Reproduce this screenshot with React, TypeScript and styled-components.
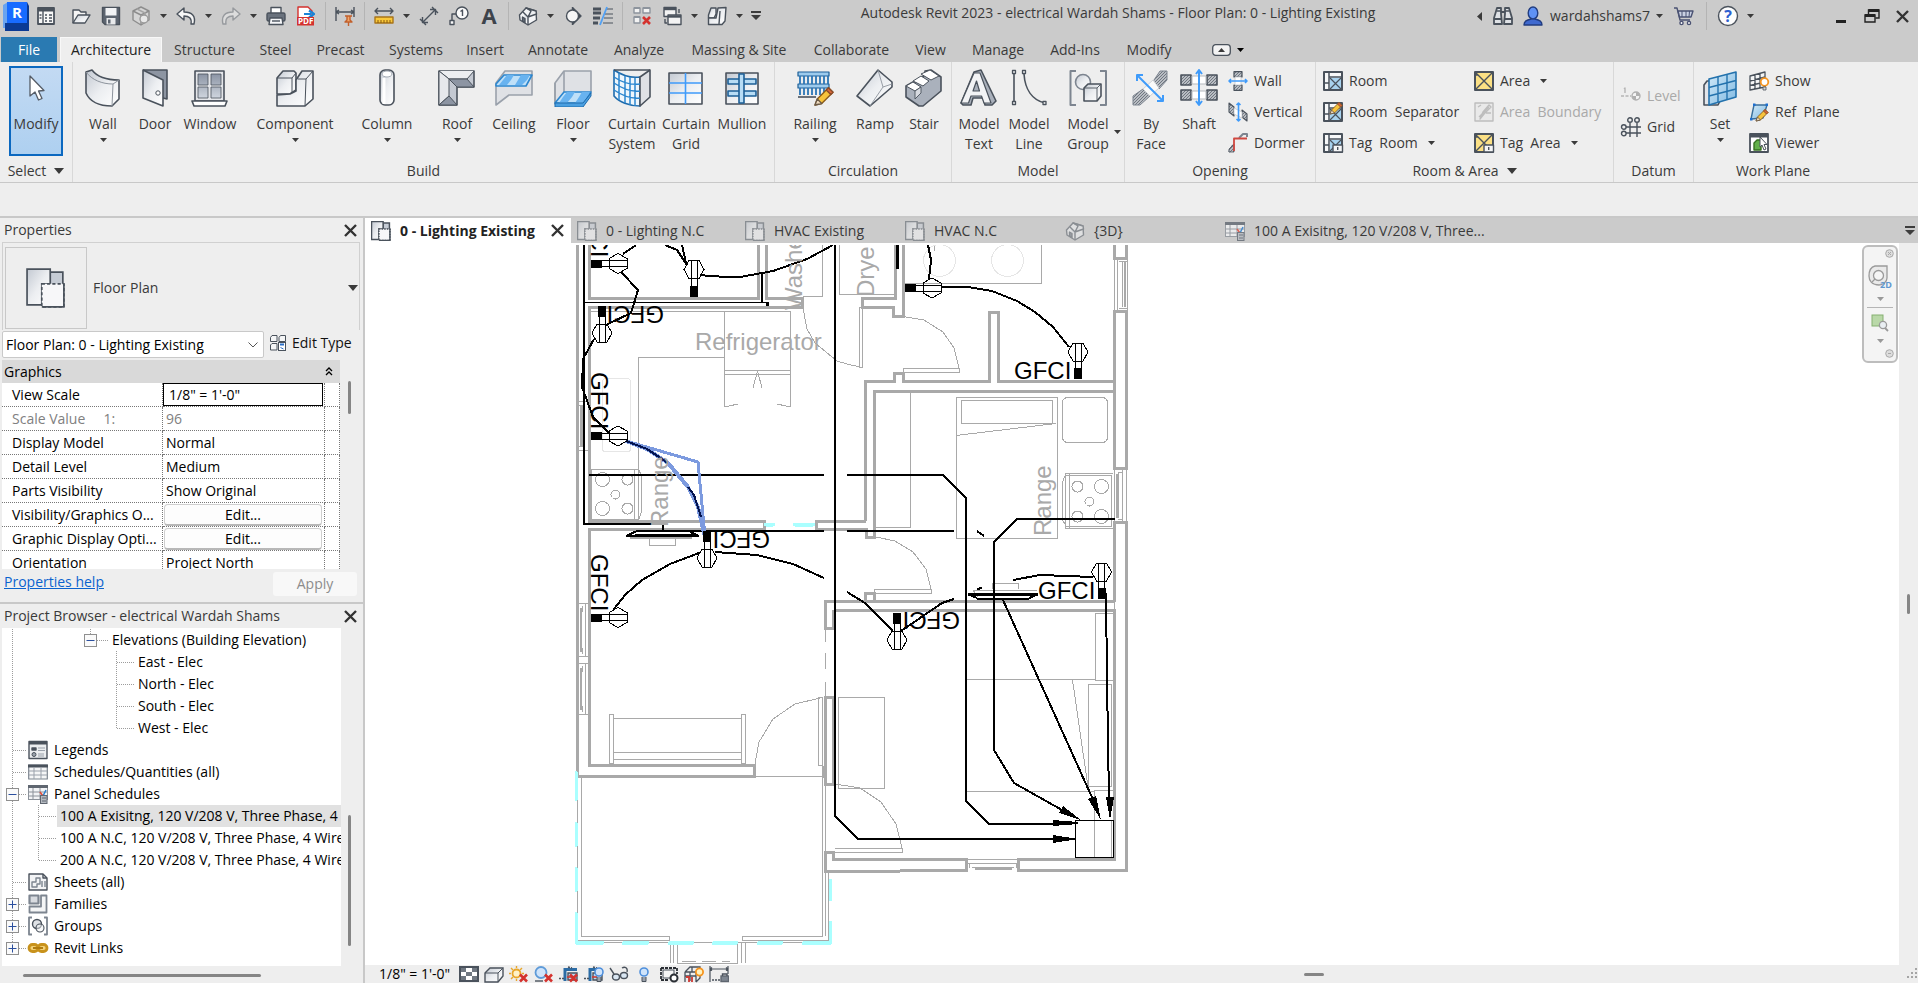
import React from "react";
import styled, { createGlobalStyle, css } from "styled-components";

const Global = createGlobalStyle`
  * { box-sizing: border-box; }
  html, body { margin: 0; padding: 0; }
  body, button, input, select, table {
    font-family: "Open Sans", "Noto Sans", sans-serif;
    font-size: 14px;
    line-height: 20px;
    color: #3a3a3a;
  }
  button { border: 0; padding: 0; background: none; }
  svg { display: block; flex: none; }
`;

/* ---------- palette ---------- */
const BAR = "#cbcbcb";
const FACE = "#eeeeee";
const INK = "#4a525c";
const BLUE = "#3f9bfa";

/* ---------- window frame ---------- */
const Window = styled.div`
  display: flex;
  flex-direction: column;
  height: 100vh;
  background: ${FACE};
  overflow: hidden;
`;

const TitleBar = styled.header`
  display: flex;
  align-items: center;
  height: 37px;
  padding-bottom: 5px;
  background: ${BAR};
  flex: none;
`;

const Logo = styled.div`
  width: 31px;
  padding-left: 3px;
`;

const Tool = styled.button<{ $w?: number; $dim?: boolean }>`
  display: flex;
  align-items: center;
  justify-content: center;
  width: ${(p) => p.$w ?? 30}px;
  height: 30px;
  flex: none;
  opacity: ${(p) => (p.$dim ? 0.4 : 1)};
`;

const Divider = styled.i<{ $w?: number }>`
  width: ${(p) => p.$w ?? 9}px;
  height: 28px;
  flex: none;
  background: linear-gradient(#b4b4b4, #b4b4b4) center / 1px 100% no-repeat;
`;

const QuickAccess = styled.div`
  display: flex;
  align-items: center;
  flex: none;
`;

const QuickGroup = styled.div`
  display: flex;
  align-items: center;
  margin-left: 5px;
`;

const WindowTitle = styled.h1`
  flex: 1;
  margin: 0;
  padding-bottom: 6px;
  font-size: 14px;
  line-height: 20px;
  font-weight: 400;
  text-align: center;
  white-space: nowrap;
  overflow: hidden;
`;

const Account = styled.div`
  display: flex;
  align-items: center;
  flex: none;
`;

const UserButton = styled.button`
  display: flex;
  align-items: center;
  justify-content: space-between;
  width: 113px;
  margin: 0 6px 0 2px;
`;

const WindowButtons = styled.div`
  display: flex;
  margin-left: 67px;
`;

/* ---------- ribbon tabs ---------- */
const RibbonTabs = styled.nav`
  display: flex;
  align-items: stretch;
  height: 25px;
  padding-left: 1px;
  background: ${BAR};
  flex: none;
`;

const RibbonTab = styled.button<{ $w: number; $kind?: "file" | "active" }>`
  width: ${(p) => p.$w}px;
  white-space: nowrap;
  flex: none;
  ${(p) =>
    p.$kind === "file" &&
    css`
      margin-right: 3px;
      background: #2a7ab2;
      color: #fff;
    `}
  ${(p) =>
    p.$kind === "active" &&
    css`
      background: ${FACE};
      color: #222;
      border: 1px solid #f8f8f8;
      border-bottom: 0;
    `}
`;

const RibbonToggle = styled.button`
  display: flex;
  align-items: center;
  gap: 6px;
  margin-left: 27px;
`;

/* ---------- ribbon ---------- */
const Ribbon = styled.section`
  display: flex;
  height: 121px;
  border-bottom: 1px solid #c8c8c8;
  flex: none;
`;

const OptionsBar = styled.div`
  height: 33px;
  flex: none;
`;

const Panel = styled.section<{ $w: number; $last?: boolean }>`
  display: flex;
  flex-direction: column;
  width: ${(p) => p.$w}px;
  flex: none;
  padding-top: 1px;
  border-right: ${(p) => (p.$last ? 0 : 1)}px solid #d8d8d8;
`;

const PanelBody = styled.div<{ $pad?: number }>`
  display: flex;
  height: 98px;
  padding-left: ${(p) => p.$pad ?? 0}px;
`;

const PanelTitle = styled.h2`
  display: flex;
  justify-content: center;
  align-items: center;
  gap: 8px;
  height: 20px;
  margin: 0;
  font-size: 14px;
  font-weight: 400;
`;

const BigButton = styled.button<{ $w: number }>`
  display: flex;
  flex-direction: column;
  align-items: center;
  width: ${(p) => p.$w}px;
  padding-top: 6px;
  white-space: nowrap;
  flex: none;
`;

const BigIcon = styled.span`
  display: flex;
  align-items: center;
  justify-content: center;
  height: 38px;
  margin-bottom: 7px;
`;

const DropMark = styled.span`
  display: flex;
  padding-top: 4px;
`;

const SideMark = styled.span`
  display: flex;
  align-items: center;
  align-self: flex-end;
  margin: -24px 1px 0 0;
`;

const ModifyButton = styled.button`
  display: flex;
  flex-direction: column;
  align-items: center;
  width: 54px;
  height: 90px;
  margin: 3px 0 0 9px;
  padding-top: 1px;
  border: 2px solid #0b68c0;
  background: linear-gradient(#c3daf3, #aed0f0);
`;

const SmallColumn = styled.div<{ $top?: number; $left?: number; $w?: number }>`
  display: flex;
  flex-direction: column;
  padding-top: ${(p) => p.$top ?? 2}px;
  margin-left: ${(p) => p.$left ?? 0}px;
  width: ${(p) => (p.$w ? p.$w + "px" : "auto")};
`;

const SmallButton = styled.button<{ $off?: boolean }>`
  display: flex;
  align-items: center;
  gap: 6px;
  height: 31px;
  white-space: pre;
  color: ${(p) => (p.$off ? "#a9a9a9" : "#3a3a3a")};
  & > svg:last-child:not(:first-child) {
    margin-left: 4px;
  }
`;

/* ---------- work area ---------- */
const WorkArea = styled.main`
  display: flex;
  flex: 1;
  min-height: 0;
  border-top: 2px solid #c8c8c8;
`;

const Dock = styled.aside`
  display: flex;
  flex-direction: column;
  width: 365px;
  flex: none;
  border-right: 2px solid #c8c8c8;
`;

const DockHeader = styled.header`
  display: flex;
  align-items: center;
  justify-content: space-between;
  height: 24px;
  padding: 0 6px 0 4px;
  flex: none;
`;

const DockTitle = styled.h2`
  margin: 0;
  font-size: 14px;
  font-weight: 400;
`;

const CloseButton = styled.button`
  display: flex;
`;

const TypeSelector = styled.button`
  display: flex;
  align-items: center;
  height: 88px;
  margin: 0 3px 0 2px;
  padding: 3px 1px 1px 2px;
  border: 1px solid #d0d0d0;
  border-bottom: 0;
  text-align: left;
  flex: none;
`;

const TypeThumb = styled.span`
  display: flex;
  align-items: center;
  justify-content: center;
  width: 82px;
  height: 82px;
  border: 1px solid #c8c8c8;
`;

const TypeName = styled.span`
  flex: 1;
  padding-left: 6px;
`;

const InstanceRow = styled.div`
  display: flex;
  align-items: center;
  height: 30px;
  padding: 1px 0 2px 2px;
  flex: none;
`;

const SelectBox = styled.div`
  display: grid;
  width: 262px;
  height: 27px;
  background: #fff;
  border: 1px solid #c9c9c9;
  border-radius: 2px;
  align-items: center;
  & > * { grid-area: 1 / 1; }
  & > svg { justify-self: end; margin-right: 5px; pointer-events: none; }
`;

const InstanceSelect = styled.select`
  appearance: none;
  width: 100%;
  height: 25px;
  border: 0;
  padding: 0 0 0 3px;
  background: transparent;
  color: #000;
`;

const EditType = styled.button`
  display: flex;
  align-items: center;
  gap: 6px;
  margin-left: 6px;
  padding-bottom: 3px;
  color: #111;
`;

const Scroller = styled.div`
  display: flex;
  height: 209px;
  padding-left: 2px;
  overflow: hidden;
  flex: none;
`;

const Grid = styled.table`
  width: 338px;
  table-layout: fixed;
  border-collapse: separate;
  border-spacing: 0;
  color: #000;
  background: #fff;
  align-self: flex-start;
  & td, & tbody th {
    height: 24px;
    padding: 0 0 0 3px;
    font-weight: 400;
    text-align: left;
    white-space: nowrap;
    overflow: hidden;
    border-bottom: 1px dotted #777;
    border-right: 1px dotted #777;
  }
  & tbody th { padding-left: 10px; text-overflow: ellipsis; }
`;

const GroupHead = styled.th`
  height: 23px;
  padding: 0 7px 0 2px;
  background: #d9d9d9;
  font-weight: 400;
`;

const GroupLabel = styled.span`
  display: flex;
  justify-content: space-between;
  align-items: center;
`;

const Muted = styled.span`
  color: #808080;
  white-space: pre;
`;

const ValueInput = styled.input`
  display: block;
  width: 160px;
  height: 23px;
  margin-left: -3px;
  padding: 0 5px;
  border: 1px solid #000;
  background: #fff;
  color: #000;
`;

const EditButton = styled.button`
  display: block;
  width: 158px;
  height: 22px;
  margin-left: -2px;
  border: 1px solid #cfcfcf;
  border-bottom: 2px solid #b8b8b8;
  border-radius: 4px;
  background: #fdfdfd;
  line-height: 19px;
  color: #000;
`;

const VTrack = styled.div<{ $top: number }>`
  display: flex;
  justify-content: flex-end;
  flex: 1;
  padding: ${(p) => p.$top}px 12px 0 0;
`;

const VThumb = styled.i<{ $h: number }>`
  width: 3px;
  height: ${(p) => p.$h}px;
  border-radius: 2px;
  background: #858585;
`;

const DockFooter = styled.footer`
  display: flex;
  align-items: flex-start;
  justify-content: space-between;
  height: 35px;
  padding: 3px 6px 0 4px;
  border-bottom: 2px solid #c8c8c8;
  flex: none;
`;

const HelpLink = styled.a`
  color: #0b63ce;
`;

const ApplyButton = styled.button`
  width: 84px;
  height: 24px;
  border-radius: 3px;
  background: #f8f8f8;
  color: #8c8c8c;
`;

/* ---------- project browser ---------- */
const TreeRow = styled.div`
  display: flex;
  flex: 1;
  min-height: 0;
  padding-left: 2px;
`;

const Tree = styled.ul`
  width: 339px;
  height: 100%;
  margin: 0;
  padding: 1px 0 0;
  list-style: none;
  background: #fff;
  color: #000;
  overflow: hidden;
`;

const TreeItem = styled.li`
  display: flex;
  align-items: center;
  height: 22px;
  white-space: nowrap;
`;

const TreeLabel = styled.span<{ $sel?: boolean; $gap?: number }>`
  flex: 1;
  height: 22px;
  line-height: 22px;
  padding-left: ${(p) => p.$gap ?? 3}px;
  overflow: hidden;
  background: ${(p) => (p.$sel ? "#e1e1e1" : "transparent")};
`;

const HTrack = styled.div`
  display: flex;
  align-items: center;
  height: 17px;
  padding: 2px 0 0 23px;
  flex: none;
`;

const HThumb = styled.i<{ $w: number }>`
  width: ${(p) => p.$w}px;
  height: 3px;
  border-radius: 2px;
  background: #858585;
`;

/* ---------- documents ---------- */
const Documents = styled.section`
  display: flex;
  flex-direction: column;
  flex: 1;
  min-width: 0;
`;

const DocTabs = styled.nav`
  display: flex;
  height: 25px;
  background: ${BAR};
  flex: none;
`;

const DocTab = styled.button<{ $w: number; $active?: boolean }>`
  display: flex;
  align-items: center;
  gap: 9px;
  width: ${(p) => p.$w}px;
  padding-left: 6px;
  white-space: nowrap;
  flex: none;
  ${(p) =>
    p.$active &&
    css`
      background: #fff;
      color: #222;
      font-weight: 700;
      & > svg:last-child { margin-left: auto; margin-right: 7px; }
    `}
`;

const DocMenu = styled.button`
  margin: 0 3px 0 auto;
`;

const ViewRow = styled.div`
  display: flex;
  flex: 1;
  min-height: 0;
`;

const Canvas = styled.div`
  position: relative;
  flex: 1;
  min-width: 0;
  overflow: hidden;
  background: #fff;
  padding-top: 2px;
`;

const NavBar = styled.div`
  position: absolute;
  top: 2px;
  right: 1px;
  display: flex;
  flex-direction: column;
  align-items: center;
  justify-content: space-between;
  width: 36px;
  height: 118px;
  padding: 2px 2px 3px;
  border: 2px solid #bdbdbd;
  border-radius: 6px;
  background: #f4f4f4;
`;

const NavEnd = styled.span`
  align-self: flex-end;
`;

const NavLine = styled.i`
  width: 26px;
  height: 1px;
  background: #b5b5b5;
`;

const RightTrack = styled.div`
  display: flex;
  justify-content: center;
  align-items: center;
  width: 19px;
  flex: none;
  background: ${FACE};
  & > i { width: 3px; height: 20px; background: #858585; border-radius: 2px; }
`;

const ViewBar = styled.footer`
  display: flex;
  align-items: center;
  height: 18px;
  padding-left: 14px;
  background: ${FACE};
  flex: none;
`;

const ScaleText = styled.button`
  width: 77px;
  text-align: left;
  color: #000;
`;

const ViewTool = styled.button`
  display: flex;
  justify-content: center;
  width: 25px;
  flex: none;
`;

const BottomTrack = styled.div`
  display: flex;
  flex: 1;
  padding-left: 573px;
  & > i { width: 20px; height: 3px; background: #858585; border-radius: 2px; }
`;

/* ---------- icon helpers ---------- */
type Kids = { children: React.ReactNode };
const S = ({ children }: Kids) => (
  <svg width="20" height="20" viewBox="0 0 20 20" overflow="visible" fill="none" stroke={INK} strokeWidth="1.4" strokeLinejoin="round">
    {children}
  </svg>
);
const B = ({ children }: Kids) => (
  <svg width="38" height="38" viewBox="0 0 38 38" fill="none" stroke={INK} strokeWidth="1.6" strokeLinejoin="round">
    {children}
  </svg>
);
const Down = ({ s = 7, c = "#3a3a3a" }: { s?: number; c?: string }) => (
  <svg width={s} height={s === 7 ? 4 : 6} viewBox="0 0 10 6" preserveAspectRatio="none" fill={c}>
    <path d="M0 0H10L5 6Z" />
  </svg>
);
const Cross = ({ s = 13 }: { s?: number }) => (
  <svg width={s} height={s} viewBox="0 0 13 13" stroke="#333" strokeWidth="2.4">
    <path d="M1 1L12 12M12 1L1 12" />
  </svg>
);
const ST = "url(#steel)";

const SharedPaint = () => (
  <svg width="0" height="0" style={{ position: "absolute" }} aria-hidden="true">
    <defs>
      <linearGradient id="steel" x1="0" y1="0" x2="1" y2="1">
        <stop offset="0" stopColor="#c3c9d2" />
        <stop offset="0.5" stopColor="#eceef1" />
        <stop offset="1" stopColor="#ffffff" />
      </linearGradient>
      <linearGradient id="glass" x1="0" y1="0" x2="1" y2="1">
        <stop offset="0" stopColor="#d3eaf8" />
        <stop offset="1" stopColor="#7fb9e2" />
      </linearGradient>
      <linearGradient id="pane" x1="0" y1="0" x2="0" y2="1">
        <stop offset="0" stopColor="#8b94a4" />
        <stop offset="1" stopColor="#cfd5de" />
      </linearGradient>
      <pattern id="hatch" width="3" height="3" patternUnits="userSpaceOnUse">
        <rect width="3" height="3" fill="#b9bdc3" />
        <path d="M0 3L3 0" stroke="#5d646e" strokeWidth="0.8" />
      </pattern>
    </defs>
  </svg>
);

const Pencil = ({ x, y, k = 1 }: { x: number; y: number; k?: number }) => (
  <g transform={`translate(${x} ${y}) scale(${k})`} strokeWidth="0.9">
    <path d="M0 12L1.500 8L9 0.500L12 3.500L4.500 11Z" fill="#f7c33c" stroke="#8a5a18" />
    <path d="M7.500 2L9 0.500L12 3.500L10.500 5Z" fill="#d9683a" stroke="#8a4a28" />
    <path d="M0 12L1.500 8L4.500 11Z" fill="#f2ddc0" stroke="#6a5a48" />
  </g>
);
const RedX = ({ x, y }: { x: number; y: number }) => (
  <path d={`M${x} ${y}l7 7m0 -7l-7 7`} stroke="#d4322e" strokeWidth="2.6" />
);

/* ---------- title bar icons ---------- */
const RevitLogo = () => (
  <svg width="27" height="29" viewBox="0 0 27 29" overflow="visible">
    <path d="M0 3L5 0V21L2 26H0Z" fill="#69a3f0" />
    <path d="M2 21H26V29H2Z" fill="#0b3a94" />
    <path d="M4 0H24V21H4Z" fill="#186bff" />
    <path d="M24 0L26 4V29L24 21Z" fill="#0b3a94" />
    <text x="9" y="16" fontFamily="Open Sans" fontWeight="700" fontSize="15" fill="#fff">R</text>
  </svg>
);
const HomeMenu = () => (
  <S>
    <rect x="2" y="2" width="16" height="16" fill="#f7f7f7" strokeWidth="1.8" />
    <path d="M2 4H18" strokeWidth="3" />
    <path d="M7 5V18" />
    <path d="M9 9H11M13 9H16M9 12H11M13 12H16M9 15H11M13 15H16M3.500 9H5.500M3.500 12H5.500" />
  </S>
);
const Open = () => (
  <S>
    <path d="M2 17V4H8L10 6H15V9" fill="#f5f5f5" />
    <path d="M2 17L7 9H19L14 17Z" fill={ST} />
  </S>
);
const Save = () => (
  <S>
    <path d="M1.500 1.500H18.500V18.500H4L1.500 16Z" fill="#5d6570" />
    <rect x="4.500" y="2" width="11" height="7.500" fill="#f2f3f5" stroke="none" />
    <rect x="5.500" y="12" width="9" height="6.500" fill="#e9eaec" stroke="none" />
    <rect x="7" y="13.500" width="2.500" height="4" fill="#5d6570" stroke="none" />
  </S>
);
const Cube = () => (
  <S>
    <path d="M10 1L18 5V14L10 19L2 14V5Z" fill="#d5d5d5" stroke="#8d8d8d" />
    <path d="M2 5L10 9L18 5M10 9V19" stroke="#8d8d8d" />
    <path d="M6 3L14 7V12" stroke="#a5a5a5" />
    <circle cx="13" cy="13" r="4" fill="#e8e8e8" stroke="#9a9a9a" />
  </S>
);
const Undo = () => (
  <S>
    <path d="M8 2L1 8L8 14V10C13 10 16 12 15 18H18C20 10 16 6 8 6Z" fill="#f6f6f6" />
  </S>
);
const Redo = () => (
  <S>
    <path d="M12 2L19 8L12 14V10C7 10 4 12 5 18H2C0 10 4 6 12 6Z" fill="#f6f6f6" />
  </S>
);
const Print = () => (
  <S>
    <path d="M5 8V1.500H15V8" fill="#fff" />
    <rect x="1" y="7" width="18" height="8" rx="1.500" fill="#6a727d" />
    <path d="M4 12H16L17 18.500H3Z" fill="#f5f6f8" />
    <path d="M6 15H14" />
  </S>
);
const Pdf = () => (
  <S>
    <path d="M2 1H12L16 5V12H2Z" fill="#fff" stroke="#d4322e" />
    <path d="M8 8H15M13 4.500L18 8L13 11.500" stroke="#1a84d8" strokeWidth="2.200" />
    <rect x="1" y="11" width="17" height="8.500" fill="#d4322e" stroke="none" />
    <text x="2" y="18" fontFamily="Open Sans" fontWeight="700" fontSize="8" fill="#fff" stroke="none">PDF</text>
  </S>
);
const DimPin = () => (
  <S>
    <path d="M1 1V15M19 1V11M1 6H19M4 4L1 6L4 8M16 4L19 6L16 8" />
    <path d="M10 10H17M12 10V14L10 16H17L15 14V10M13.500 16V20" fill="#f3a869" stroke="#c2602c" />
  </S>
);
const Measure = () => (
  <S>
    <path d="M1 5H19M4 2L1 5L4 8M16 2L19 5L16 8" />
    <rect x="1" y="11" width="18" height="6" fill="#f9c83a" stroke="#a8741a" />
    <path d="M4 14V17M7 14V17M10 14V17M13 14V17M16 14V17" stroke="#8a5c10" strokeWidth="1" />
  </S>
);
const Aligned = () => (
  <S>
    <path d="M4 16L16 4M11 3.500L16.500 3.500L16.500 9M3.500 11V16.500H9M1 13L7 19M13 1L19 7" />
  </S>
);
const TagOne = () => (
  <S>
    <circle cx="13" cy="7" r="6" fill="#fafafa" />
    <path d="M13.500 10V4L11.500 5.500M7 8H3V16" />
    <path d="M1 14.500H5V18.500H1Z" fill="#fafafa" />
  </S>
);
const LetterA = () => (
  <svg width="20" height="20" viewBox="0 0 20 20" overflow="visible">
    <text x="10" y="18" textAnchor="middle" fontFamily="Open Sans" fontWeight="700" fontSize="22" fill="#3d434b">A</text>
  </svg>
);
const House = ({ faded }: { faded?: boolean }) => (
  <svg width="20" height="20" viewBox="0 0 20 20" fill="none" stroke={INK} strokeWidth="1.4" strokeLinejoin="round" opacity={faded ? 0.5 : 1}>
    <path d="M1.500 9L8 2L18 5L18.500 14L10 19L2 14Z" fill="#f4f5f7" />
    <path d="M10 19V11L18.500 8L18 5L8 2L13 5L10 11L5 6" fill={ST} />
    <path d="M4.500 11V15L7 16.500V12.500Z" fill="#6a727d" />
  </svg>
);
const Section = () => (
  <S>
    <path d="M10 2V18L18 10Z" fill="#3d434b" />
    <circle cx="9.500" cy="10" r="6" fill="#f6f6f6" />
    <path d="M9.500 1V4M9.500 16V19" />
  </S>
);
const ThinLines = () => (
  <S>
    <path d="M0 3H8M0 7H8M0 12H7M0 17H5" strokeWidth="3" />
    <path d="M13 3H20M12 8H20M11 12H20M10 17H20" strokeWidth="1" />
    <path d="M14 1L7 19" stroke="#4fa0f5" strokeWidth="1.800" />
  </S>
);
const CloseHidden = () => (
  <S>
    <path d="M2 2H8V7H2ZM11 2H18V7H11ZM2 11H8V17H2Z" fill="#f3f3f3" stroke="#8d949d" />
    <path d="M2 2H8M11 2H18M2 11H8" strokeWidth="2" stroke="#8d949d" />
    <RedX x={11} y={11} />
  </S>
);
const Switch = () => (
  <S>
    <rect x="2" y="1.500" width="12" height="9" fill="#f3f3f3" />
    <path d="M2 3H14" strokeWidth="2.400" />
    <rect x="6" y="9" width="13" height="9.500" fill="#f3f3f3" />
    <path d="M6 10.500H19" strokeWidth="2.400" />
    <path d="M3 13V17H5M17 3V7" />
  </S>
);
const Family = () => (
  <S>
    <path d="M1.500 9L4 2H9V8L7 12H1.500Z" fill={ST} />
    <path d="M1.500 12H9L11 2L19 1.500L18 15L15 18.500H1.500Z" fill={ST} />
    <path d="M13 5L12 18" />
  </S>
);
const Customize = () => (
  <svg width="10" height="10" viewBox="0 0 10 10" fill="#3d3d3d">
    <path d="M0 0H10V2H0ZM0 4H10L5 9Z" />
  </svg>
);
const Binoculars = () => (
  <S>
    <path d="M4 2H8V8L9 18H1V12ZM12 2H16L19 12V18H11L12 8Z" fill="#dfe2e6" strokeWidth="1.800" />
    <path d="M8 6H12M1 13H9M11 13H19" strokeWidth="1.800" />
    <path d="M4 5H8M12 5H16" />
  </S>
);
const User = () => (
  <S>
    <path d="M1 19C1 15 4 14 8 13V11H12V13C16 14 19 15 19 19Z" fill="#3f69cf" stroke="#223d80" />
    <ellipse cx="10" cy="7" rx="4.800" ry="6" fill="#5f92f5" stroke="#223d80" />
  </S>
);
const Cart = () => (
  <S>
    <path d="M0 2H3L6 14H16" stroke="#4a5273" />
    <path d="M4 5H19L17 11H5.500Z" fill="#c9d0e2" stroke="#4a5273" />
    <path d="M8 5V11M12 5V11M15.500 5L15 11" stroke="#4a5273" strokeWidth="1" />
    <circle cx="7.500" cy="17" r="1.600" fill="#fff" stroke="#4a5273" />
    <circle cx="15" cy="17" r="1.600" fill="#fff" stroke="#4a5273" />
  </S>
);
const Help = () => (
  <svg width="22" height="22" viewBox="0 0 22 22" overflow="visible">
    <circle cx="11" cy="11" r="9.500" fill="#fdfdfd" stroke="#4a525c" strokeWidth="1.400" />
    <text x="11" y="17" textAnchor="middle" fontFamily="Open Sans" fontWeight="700" fontSize="16" fill="#2d5fd0">?</text>
  </svg>
);

/* ---------- ribbon icons, large ---------- */
const ArrowCursor = () => (
  <B>
    <path d="M13 7V27L18 23L21.500 31L25 29.500L21.500 22L27 21.500Z" fill="#fff" stroke="#555c66" strokeWidth="1.300" />
  </B>
);
const WallI = () => (
  <B>
    <path d="M2 3L8 1C14 9 24 11 35 11V30L28 37C16 37 6 33 2 24Z" fill={ST} />
    <path d="M2 3C8 11 18 15 29 15L35 11M29 15L28 37" strokeWidth="1" stroke="#8d949d" />
  </B>
);
const DoorI = () => (
  <B>
    <path d="M7 1H31V30L27 29" fill="#8d95a2" />
    <path d="M7 1L27 11V37L7 29Z" fill={ST} />
    <circle cx="22" cy="24" r="2.200" fill="#fff" strokeWidth="1" />
  </B>
);
const WindowI = () => (
  <B>
    <rect x="4" y="2" width="29" height="30" fill="#e4e6ea" />
    <path d="M7 5H17V16H7ZM20 5H30V16H20ZM7 18H17V29H7ZM20 18H30V29H20Z" fill="url(#pane)" strokeWidth="0.800" />
    <path d="M1 32H36L34 37H3Z" fill="#fff" />
  </B>
);
const ComponentI = () => (
  <B>
    <path d="M1 9L7 2H18L20 4V21L14 25H1Z" fill={ST} />
    <path d="M1 9H16L20 4M16 9V24" strokeWidth="1" />
    <path d="M1 26L14 25L20 22V11L26 2H37V30L29 37H1Z" fill={ST} />
    <path d="M22 10H30L37 2M30 10L29 37" strokeWidth="1" />
  </B>
);
const ColumnI = () => (
  <B>
    <rect x="12" y="1" width="14" height="35" rx="5" fill={ST} />
    <ellipse cx="19" cy="5" rx="5" ry="3" fill="#fff" stroke="#9aa1ab" strokeWidth="0.900" />
    <path d="M16 9V35" stroke="#fff" strokeWidth="3" />
  </B>
);
const RoofI = () => (
  <B>
    <path d="M1 2H36V18H19V36H1Z" fill="#c4c9d2" />
    <path d="M1 2L11 10H29L36 2" fill="#eceef1" strokeWidth="1" />
    <path d="M29 10L36 18H19L11 10Z" fill="#8d95a3" strokeWidth="1" />
    <path d="M11 10V27L1 36V2Z" fill="#e6e8ec" strokeWidth="1" />
    <path d="M11 27L19 36H1Z" fill="#8d95a3" strokeWidth="1" />
  </B>
);
const CeilingI = () => (
  <B>
    <path d="M1 14L10 2H37V26H14L1 36Z" fill="#dfe1e5" stroke="#9aa1ab" />
    <path d="M1 15L9 6H37L31 17H1Z" fill="#bfe0f8" stroke="#2b86cf" />
    <path d="M12 6L8 11H16L19 6ZM26 6L23 11H32L35 6ZM8 11L4 16H12L16 11ZM23 11L20 16H27L32 11Z" fill="#68b3f0" stroke="none" />
  </B>
);
const FloorI = () => (
  <B>
    <path d="M10 2H37V23L28 35H1V14Z" fill="#dfe1e5" stroke="#9aa1ab" />
    <path d="M10 2V24M1 14V34" stroke="#9aa1ab" />
    <path d="M1 34L10 23H37L29 34Z" fill="#bfe0f8" stroke="#2b86cf" />
    <path d="M13 23L9 28H18L21 23ZM28 23L25 28H33L36 23ZM9 28L5 34H13L18 28ZM25 28L21 34H29L33 28Z" fill="#68b3f0" stroke="none" />
    <path d="M1 34H29L37 24V27L29 38H1Z" fill="#4a9fe0" stroke="#1f6cad" strokeWidth="1" />
  </B>
);
const CurtainSystemI = () => (
  <B>
    <path d="M1 1C10 7 20 9 27 8V37C16 37 6 33 1 27Z" fill="#eef6fc" stroke="#1f6cad" />
    <path d="M27 8L37 1V28L27 37Z" fill="#dfe1e5" />
    <path d="M1 1H37" />
    <path d="M6 4V31M12 7V34M17 8V36M22 9V37M1 8C10 14 20 16 27 15M1 14C10 20 20 23 27 22M1 21C10 27 20 30 27 29" stroke="#2b86cf" strokeWidth="1.500" />
  </B>
);
const CurtainGridI = () => (
  <B>
    <rect x="2" y="4" width="33" height="31" fill={ST} />
    <path d="M18.500 4V35M2 14H35M2 24H35" stroke={BLUE} strokeWidth="1.600" />
  </B>
);
const MullionI = () => (
  <B>
    <rect x="3" y="4" width="32" height="31" fill={ST} />
    <path d="M5 10H33V15H5ZM5 22H33V27H5Z" fill="#b7dcf5" stroke="#1d5f97" />
    <path d="M16 5H21V34H16Z" fill="#b7dcf5" stroke="#1d5f97" />
  </B>
);
const RailingI = () => (
  <B>
    <path d="M2 3H33V7H2ZM2 15H33V19H2Z" fill="#9ccbee" stroke="#1d5f97" strokeWidth="1.200" />
    <path d="M4 7V15M8 7V15M12 7V15M16 7V15M20 7V15M24 7V15M28 7V15M32 7V15M4 19V26M8 19V26M12 19V26M16 19V26M20 19V26M24 19V26M28 19V26" stroke="#2b75b5" strokeWidth="1.800" />
    <path d="M2 28H20" />
    <Pencil x={19} y={18} k={1.5} />
  </B>
);
const RampI = () => (
  <B>
    <path d="M1 27L22 1L36 13V18L14 37Z" fill={ST} />
    <path d="M22 1L27 18L36 15M27 18L14 37" strokeWidth="0.900" stroke="#8d949d" />
  </B>
);
const StairI = () => (
  <B>
    <path d="M1 17L8 13H14V10L20 6V2L26 1L36 8V22L18 37H14L1 28Z" fill="#aab1bc" />
    <path d="M1 17L8 13L16 18L10 22ZM8 12L16 7L24 12L18 17ZM16 5L25 1L34 7L26 11Z" fill="#fff" strokeWidth="1" />
    <path d="M10 22L16 18V24L10 30Z" fill="#d7dae0" strokeWidth="0.900" />
  </B>
);
const ModelTextI = () => (
  <B>
    <path d="M1 34L14 3L21 1L36 32L32 36H25L23 29H13L11 36H3Z" fill="#a9b0bb" />
    <path d="M1 34L14 4H20L31 34H24L21.500 27H11L8.500 34ZM13 22H19.500L16.500 12Z" fill="#f2f3f5" fillRule="evenodd" strokeWidth="1.200" />
  </B>
);
const ModelLineI = () => (
  <B>
    <path d="M4 4V32M14 5C15 20 22 31 35 34" />
    <path d="M2.500 1.500H5.500V4.500H2.500ZM2.500 32.500H5.500V35.500H2.500ZM12.500 1.500H15.500V4.500H12.500ZM33 32.500H36V35.500H33Z" fill="#fff" strokeWidth="1.300" />
  </B>
);
const ModelGroupI = () => (
  <B>
    <path d="M7 2H1.500V36H7M31 2H37V36H31" stroke="#7d8590" strokeWidth="2" />
    <circle cx="14" cy="13" r="7.500" fill={ST} stroke="#7d8590" />
    <path d="M15 19L19 15H32V27L28 32H15Z" fill={ST} />
    <path d="M15 19H28L32 15M28 19V32" strokeWidth="0.900" />
  </B>
);
const ByFaceI = () => (
  <B>
    <path d="M1 36V27L11 20L18 27L8 36ZM22 11L28 2H35V11L27 20L21 13Z" fill="url(#hatch)" stroke="#7d8590" strokeWidth="1" />
    <path d="M11 20L21 11L27 19L18 27Z" fill="#fafafa" stroke="#c5c9ce" strokeWidth="0.800" />
    <path d="M6 7L30 31M5 12V6H11M31 26V32H25" stroke={BLUE} strokeWidth="2" />
  </B>
);
const ShaftI = () => (
  <B>
    <path d="M1 6H11V16H1ZM27 6H37V16H27ZM1 21H11V31H1ZM27 21H37V31H27Z" fill="url(#hatch)" />
    <path d="M12 7H26V15H12ZM12 22H26V30H12Z" fill="#fff" stroke="#b5b9be" strokeWidth="1" />
    <path d="M19 2V36M16 5L19 1L22 5M16 32L19 36L22 32" stroke={BLUE} strokeWidth="2" />
  </B>
);
const SetI = () => (
  <B>
    <path d="M3 16L6 12H20V30L17 36H3Z" fill="#e3e5e9" />
    <path d="M8 10L35 3V28L8 36Z" fill="url(#glass)" stroke="#2372ad" />
    <path d="M17 8V33M26 5.500V31M8 18.500L35 11.500M8 27L35 20" stroke="#2372ad" strokeWidth="1.400" />
  </B>
);

/* ---------- ribbon icons, small ---------- */
const OpenWall = () => (
  <S>
    <path d="M6 0.700H14V6H6ZM6 14H14V19.300H6Z" fill="url(#hatch)" strokeWidth="1.200" />
    <path d="M7 6H13V14H7Z" fill="#fff" stroke="#c5c9ce" strokeWidth="0.800" />
    <path d="M1 10H19M3 8L1 10L3 12M17 8L19 10L17 12" stroke={BLUE} strokeWidth="1.600" />
  </S>
);
const OpenVertical = () => (
  <S>
    <path d="M1 1L6 5V14L1 10ZM14 8L19 12V19L14 15Z" fill="url(#hatch)" strokeWidth="1.100" />
    <path d="M6 6L14 10V16L6 12Z" fill="#fff" stroke="#c5c9ce" strokeWidth="0.800" />
    <path d="M10.500 1V19M8.500 3L10.500 1L12.500 3M8.500 17L10.500 19L12.500 17" stroke={BLUE} strokeWidth="1.600" />
  </S>
);
const OpenDormer = () => (
  <S>
    <path d="M1 19L5 12M11 5L15 1H19V4" fill="none" stroke="#7d8590" strokeWidth="2" />
    <path d="M1 19V16L6 11V19Z" fill="url(#hatch)" strokeWidth="0.800" />
    <path d="M6 18V5.500H19" stroke="#d04840" strokeWidth="1.800" />
  </S>
);
const roomBase = (
  <>
    <rect x="1" y="1" width="18" height="18" fill="#f7f8f9" strokeWidth="2" />
    <path d="M6 1V19M1 12H6M6 6H19" strokeWidth="1.500" />
    <rect x="7" y="7" width="11" height="11" fill="#a8d2ee" stroke="none" />
    <path d="M7 7L18 18M18 7L7 18" strokeWidth="1.200" />
  </>
);
const RoomI = () => <S>{roomBase}</S>;
const RoomSepI = () => <S>{roomBase}<Pencil x={7} y={0} k={1} /></S>;
const TagMark = () => (
  <>
    <rect x="10" y="12" width="9.500" height="7" fill="#f5f6f7" />
    <path d="M14.700 14V17" />
  </>
);
const TagRoomI = () => <S>{roomBase}<TagMark /></S>;
const areaBase = (
  <>
    <rect x="1" y="1" width="18" height="18" fill="#fbe084" strokeWidth="2" />
    <path d="M2 2L18 18M18 2L2 18M1 4H4" strokeWidth="1.400" />
  </>
);
const AreaI = () => <S>{areaBase}</S>;
const TagAreaI = () => <S>{areaBase}<TagMark /></S>;
const AreaBoundI = () => (
  <S>
    <rect x="1" y="1" width="18" height="18" fill="#e9e9e9" stroke="#bdbdbd" />
    <path d="M5 15L15 5M4 5L7 3M12 11H17M6 17L9 10L15 3L17 5L10 12Z" stroke="#bdbdbd" fill="#f7f7f7" />
  </S>
);
const LevelI = () => (
  <S>
    <path d="M0 10H10" stroke="#b5b5b5" strokeDasharray="3 1.500" />
    <path d="M4 7V2L3 3" stroke="#b5b5b5" />
    <circle cx="15" cy="10" r="4" fill="#f4f4f4" stroke="#b0b0b0" />
    <path d="M15 6V14A4 4 0 0 1 11 10H19A4 4 0 0 0 15 6" fill="#b0b0b0" stroke="none" />
  </S>
);
const GridI = () => (
  <S>
    <path d="M9 6V20M16 6V20M5 10H20M5 16H20" />
    <circle cx="9" cy="3" r="2.300" /><circle cx="16" cy="3" r="2.300" /><circle cx="2.800" cy="10" r="2.300" /><circle cx="2.800" cy="16.500" r="2.300" />
  </S>
);
const ShowI = () => (
  <S>
    <path d="M1 5L16 1V16L1 19ZM1 10L16 6M1 14.500L16 11M6 4V18M11 2.500V17" fill="#f4f5f6" strokeWidth="1.300" />
    <circle cx="15.500" cy="11" r="3.800" fill="#fff" stroke="#f5941f" strokeWidth="1.800" />
    <path d="M14 16H17V19H14Z" fill="#d9d9d9" strokeWidth="0.800" />
  </S>
);
const RefI = () => (
  <S>
    <path d="M2 17L5 3H18L14 16Z" fill="url(#glass)" stroke="#3b6f9a" />
    <path d="M1 16H3.500V18.500H1ZM4 1.500H6.500V4H4ZM16.500 1.500H19V4H16.500Z" fill="#1e6fd0" stroke="none" />
    <Pencil x={7} y={7} k={1} />
  </S>
);
const ViewerI = () => (
  <S>
    <rect x="1" y="1" width="18" height="18" fill="#fff" strokeWidth="1.800" />
    <path d="M1 3H19" strokeWidth="3" />
    <path d="M5 10L8 7H12V17H5Z" fill="#62b04a" stroke="#35701f" />
    <path d="M11 4V14L13 12L15 17L17 16L15 11.500H18Z" fill="#fff" strokeWidth="1" />
  </S>
);

/* ---------- view, tab and tree icons ---------- */
const PlanShape = ({ w, faded }: { w: number; faded?: boolean }) => (
  <svg width={w} height={w} viewBox="0 0 38 38" fill={ST} stroke={INK} strokeWidth={w > 30 ? 1.6 : 2.8} opacity={faded ? 0.5 : 1}>
    <path d="M23 4H35V16H23Z" fill="#c6ccd5" />
    <path d="M1 1H23V15H15V35H1Z" />
    <path d="M15 15H36V37H15Z" fill="#f7f7f9" strokeDasharray="3 2" />
    <path d="M36 15V37H15" fill="none" />
  </svg>
);
const ScheduleI = ({ faded }: { faded?: boolean }) => (
  <svg width="20" height="20" viewBox="0 0 20 20" fill="none" stroke="#8c929a" opacity={faded ? 0.8 : 1}>
    <rect x="0.500" y="1.500" width="19" height="14" fill="#f2f3f5" />
    <path d="M0 2.500H20" stroke="#5f6670" strokeWidth="3" />
    <path d="M0 8H20M0 12H20M5 4V16M12 4V16" />
    <path d="M12 8L15 12" stroke="#e04a3a" strokeWidth="1.500" /><path d="M18 6L15 12" stroke="#2a7fd0" strokeWidth="1.500" />
    <rect x="12.500" y="11.500" width="6.500" height="8" fill="#b5bac1" stroke="#5f6670" />
    <path d="M14 14H18M14 17H18" stroke="#5f6670" />
  </svg>
);
const tree = {
  legend: (
    <S><rect x="1" y="1.500" width="18" height="17" fill="#eceef0" /><path d="M1 3H19" strokeWidth="3" /><path d="M4 8H8V10H4Z" fill={INK} /><circle cx="6" cy="14.500" r="2" fill="#9aa1ab" strokeWidth="1" /><path d="M10 8H17M10 10.500H17M10 14H16M10 16H16" strokeWidth="1" stroke="#9aa1ab" /></S>
  ),
  sched: (
    <S><rect x="0.700" y="3" width="18.600" height="14" fill="#f5f6f7" stroke="#7d8590" strokeWidth="1.200" /><path d="M0 4H20" strokeWidth="3" /><path d="M1 9H19M1 13H19M6 5V17M13 5V17" stroke="#9aa1ab" strokeWidth="1" /></S>
  ),
  panel: <ScheduleI />,
  sheet: (
    <S><path d="M1 2H15L19 6V18H1Z" fill="#f2f3f5" /><path d="M4 15V10H8V6H12V12H9V15ZM14 9V15M17 9V15" stroke="#7d8590" /><path d="M15 2V6H19" /></S>
  ),
  family: (
    <S><path d="M1.500 1.500H10.500V9.500H1.500Z" fill="#d8dbe0" strokeWidth="2.200" stroke="#7d8590" /><path d="M13 1.500H18.500V18.500H1.500V12.500H13Z" fill="#f4f5f6" strokeWidth="1.800" stroke="#7d8590" /></S>
  ),
  group: (
    <S><path d="M4 1.500H1V18.500H4M16 1.500H19V18.500H16" stroke="#7d8590" strokeWidth="1.800" /><circle cx="9" cy="8" r="4.500" fill="#dfe2e6" /><circle cx="12" cy="12" r="4" fill="#f2f3f5" fillOpacity="0.500" strokeWidth="1.100" /></S>
  ),
  link: (
    <S><rect x="1" y="6.500" width="9" height="7" rx="3.500" fill="#f3d27a" stroke="#c8921c" strokeWidth="2.800" /><rect x="10" y="6.500" width="9" height="7" rx="3.500" fill="#f3d27a" stroke="#c8921c" strokeWidth="2.800" /><path d="M5 10H15" stroke="#b07c10" strokeWidth="2" /></S>
  ),
};

/* ---------- view control bar icons ---------- */
const V = ({ children }: Kids) => (
  <svg width="20" height="17" viewBox="0 0 20 17" fill="none" stroke={INK} strokeWidth="1.4">
    {children}
  </svg>
);
const crop = <><path d="M6 15V3.500H18" stroke="#2c6ca5" strokeWidth="3" /><path d="M9 14V7H18V14Z" fill="#b9d9f2" stroke="#4a525c" /><path d="M0 12.500H6M9 1L13 2" strokeDasharray="2 1" /><path d="M8 11H13" stroke="#cf3a34" strokeWidth="1.600" /></>;
const bulb = (x: number) => <><circle cx={x} cy="6" r="4" fill="#cfe4fb" stroke="#4e8fdc" strokeWidth="1.600" /><path d={`M${x - 2} 11V15.500H${x + 2}V11`} fill="#9aa1ab" strokeWidth="1" /></>;
const viewTools: [string, React.ReactNode][] = [
  ["Detail Level", <V key="a"><rect x="1" y="1" width="18" height="14" fill="#fff" strokeWidth="2" /><path d="M2 2H7V6H2ZM13 2H18V6H13ZM7 6H13V10H7ZM2 10H7V14H2ZM13 10H18V14H13Z" fill="#6f7781" stroke="none" /></V>],
  ["Visual Style", <V key="b"><path d="M1 7L6 2H19V10L14 16H1Z" fill={ST} /><path d="M1 7H14L19 2M14 7V16" strokeWidth="1" /></V>],
  ["Sun Path", <V key="c"><circle cx="7.500" cy="7.500" r="4" fill="#fff3c8" stroke="#e8a72c" strokeWidth="1.800" /><path d="M7.500 0V2M7.500 13V15M0 7.500H2M13 7.500H15M2 2L4 4M13 2L11 4M2 13L4 11" stroke="#e8a72c" /><RedX x={11} y={8.5} /></V>],
  ["Shadows", <V key="d"><circle cx="7" cy="6.500" r="5.500" fill="#cfe4fb" stroke="#5f9bd8" strokeWidth="1.800" /><path d="M1 15H9" /><RedX x={11} y={8.5} /></V>],
  ["Crop View", <V key="e">{crop}<RedX x={11} y={8.5} /></V>],
  ["Show Crop Region", <V key="f">{crop}{bulb(15)}</V>],
  ["Temporary Hide", <V key="g"><path d="M1 2L5 8M13 2C16 0 19 2 18 6" /><ellipse cx="7" cy="11" rx="3.500" ry="3" fill="#d9e6f2" /><ellipse cx="15" cy="9.500" rx="3.500" ry="3" fill="#d9e6f2" /></V>],
  ["Reveal Hidden Elements", <V key="h">{bulb(10)}</V>],
  ["Temporary View Properties", <V key="i"><path d="M2 2H18V8M2 2V14H10" strokeWidth="1.800" stroke="#2b2f35" strokeDasharray="3 1" /><rect x="4" y="4" width="11" height="8" fill="#f5f5f5" strokeWidth="1" /><circle cx="15" cy="12" r="3.500" fill="#fff" stroke="#2b2f35" strokeWidth="2" /></V>],
  ["Analytical Model", <V key="j"><path d="M1 6L6 1H16V12L12 16M1 6H12V16M1 6V16M6 6V15M1 10H12M8 1V6" strokeWidth="1.300" /><path d="M2 11H5V16M8 11V16" stroke="#cf3a34" strokeWidth="1.800" /><circle cx="15.500" cy="6" r="3.600" fill="#fff2c0" stroke="#f5941f" strokeWidth="1.800" /></V>],
  ["Reveal Constraints", <V key="k"><path d="M1 0V16M19 0V8M1 3H19M3 1.500L1 3L3 4.500M17 1.500L19 3L17 4.500" strokeWidth="1.200" /><path d="M3 14H11" strokeDasharray="2 1" /><rect x="12" y="10" width="7.500" height="5.500" fill="#7d8590" stroke="#5f6670" /><path d="M13.500 10V8H18V10" /></V>],
];

/* ---------- floor plan ---------- */
const GREY = "#a9a9a9";

const Outlet = ({ x, y, r = 0 }: { x: number; y: number; r?: number }) => (
  <g transform={`translate(${x} ${y}) rotate(${r})`} fill="none" stroke="#000" strokeWidth="1">
    <rect x="10" y="-3" width="26" height="6" />
    <path d="M18 -5L27 -10L36 -5V5L27 10L18 5Z" />
    <rect x="0" y="-4" width="11" height="8" fill="#000" stroke="none" />
  </g>
);

const tags: [string, number, number, number, string][] = [
  ["GFCI", 591, 200, 90, "#000"],
  ["GFCI", 591, 372, 90, "#000"],
  ["GFCI", 591, 554, 90, "#000"],
  ["GFCI", 664, 306, 180, "#000"],
  ["GFCI", 770, 531, 180, "#000"],
  ["GFCI", 960, 612, 180, "#000"],
  ["GFCI", 1014, 379, 0, "#000"],
  ["GFCI", 1038, 599, 0, "#000"],
  ["Refrigerator", 695, 350, 0, GREY],
  ["Washer", 802, 310, -90, GREY],
  ["Dryer", 874, 297, -90, GREY],
  ["Range", 668, 527, -90, GREY],
  ["Range", 1051, 536, -90, GREY],
];

const outlets: [number, number, number][] = [
  [591, 263.5, 0], [694, 296.5, -90], [602, 306, 90], [591, 436, 0], [707, 531, 90],
  [591, 617.5, 0], [905, 288, 0], [1078, 379, -90], [897, 613, 90], [1101.5, 599, -90],
];

const burners: [number, number, number][] = [
  [602, 479, 7], [627, 479, 5.5], [615, 494, 4.5], [602, 508, 7], [627, 508, 5.5],
  [1077, 486, 5.5], [1101, 486, 7], [1089, 501, 4.5], [1077, 516, 5.5], [1101, 516, 7],
];

const FloorPlan = () => (
  <svg width="1534" height="720" viewBox="365 245 1534 720" shapeRendering="crispEdges" fill="none" role="img" aria-label="Lighting floor plan">
    {/* fixtures in the lightest line weight */}
    <g stroke="#e6e6e6">
      <rect x="602.500" y="378.500" width="28" height="73" rx="3" />
      <circle cx="939.500" cy="260.500" r="16" />
      <circle cx="1007.500" cy="260.500" r="16" />
    </g>

    {/* furniture, doors and windows */}
    <g stroke={GREY} strokeWidth="1">
      <path d="M591 311.500H746M822.500 245V296.500H803M839.500 245V294.500H895" />
      <path d="M803 308L807 329L815 343L837 361L847 364L860 367M859.500 307.500H862.500V367.500H859.500Z" />
      <path d="M724.500 407V311.500H790.500V407M724.500 370.500H790.500M724.500 374.500H790.500M757.500 371L753 388M757.500 371L762 388M724.500 407L738 404M790.500 407L777 404" />
      <path d="M724 357.500H638.500V469.500H591.500V519.500H638.500V469.500M634.500 469V519M639 470L641.500 476V512L639 519" />
      <path d="M578 401.500H588M578 450.500H588M582.500 405V446M579 405.500H583M579 446.500H583" />
      {burners.map(([cx, cy, r]) => <circle key={`${cx}-${cy}`} cx={cx + 0.5} cy={cy + 0.5} r={r} />)}
      <path d="M903 316.500L924 320L943 332L954 348L959 368H903.500V372.500H959.500V368" />
      <path d="M903 283.500H1041.500V245M934.500 246V251" />
      <path d="M876 392.500H910.500V527.500H876M956.500 397.500H1057.500V538.500H956.500ZM961.500 400.500H1052.500V423.500H961.500ZM956 435.500L1056 423.500" />
      <rect x="1062.500" y="397.500" width="45" height="45" rx="5" />
      <path d="M1065.500 473.500H1113M1065.500 473V528.500H1113M1069.500 473V528M1065 475.500H1112M1065 526.500H1112M1111.500 475V526M1065 476L1062.500 482V520L1065 524" />
      <path d="M1117.500 258V311M1122.500 262V307M1119 261.500H1127M1119 308.500H1127M1114.500 258V311M1127.500 258V311M1122.500 470V522M1118.500 473V518M1118 472.500H1123M1118 519.500H1123M1114.500 469V522M1126.500 469V522" />
      <path d="M1114.500 381V391M1114.500 602V611" />
      <path d="M649.500 539V545.500H675.500V539M992.500 589V583.500H1018.500V589M973 590.500H1037M973 590L978 597" />
      <path d="M578 603.500H588M578 656.500H588M578 663.500H588M578 714.500H588M585.500 603V656M585.500 663V714M582.500 606V612M582.500 648V654M582.500 666V672M582.500 706V712" />
      <path d="M609.500 714.500H613.500V763.500H609.500ZM741.500 714.500H745.500V763.500H741.500ZM613 718.500H741M613 752.500H741M613 759.500H741" />
      <path d="M755 764L759 742L773 719L795 704L820 698M818.500 697.500H822.500V765.500H818.500ZM755 776.500H823" />
      <path d="M825.500 628V642M825.500 653V669M825.500 682V697" />
      <path d="M838.500 697.500H884.500V788.500H838.500ZM835 784L860 788L881 802L896 824L902 848M834.500 848.500H902.500V852.500H834.500" />
      <path d="M876 537L895 541L913 552L926 569L931 589M874.500 589.500H931.500V593.500H874.500Z" />
      <path d="M967 679.500H1096M1095.500 613.500H1113.500V680.500H1095.500ZM1088.500 684.500H1111.500V786.500H1088.500ZM967 791.500H1094M1072.500 680L1088 787M1094.500 790V857M1094 790.500H1113M1111.500 820V857" />
      <path d="M967 859.500H1019M967 863.500H1017M969.500 864V868M1016.500 864V868M972 867.500H1014" />
      <path d="M577.500 777V940.500H669.500V936.500H581.500V777M822.500 777V936.500H742.500V940.500H828.500V872M825.500 784V936" />
      <path d="M577 942.500H829M670.500 942V963M673.500 942V963M677.500 942V963.500H737.500V942M741.500 942V963M745.500 942V963" />
      <path d="M682 961.500H730" strokeDasharray="14 6" />
    </g>

    {/* cut walls */}
    <g stroke={GREY} strokeWidth="3">
      <path d="M577.500 245V777M589.500 245V298.500H758.500V245M766.500 245V298.500H802.500V307.500H589.500V521.500H764.500V529.500H589.500V765.500H754.500V776.500H577" />
      <path d="M866 521.500H816.500V529.500H866.500V537.500H874.500V391.500H1114.500" />
      <path d="M865.500 521V381.500H894.500V373.500H903.500V381.500H989.500V312.500H998.500V381.500H1114" />
      <path d="M895.500 245V298.500H862.500V307.500H893.500V316.500H903.500V245" />
      <path d="M1114.500 245V258.500H1126.500V245M1114.500 311.500V468.500H1126.500V311.500ZM1114.500 602V522.500H1126.500V870.500H1018.500V859.500H1114.500V610.500H834" />
      <path d="M1124.500 262V307M1116.500 474V518M580.500 405V446M580.500 608V652M580.500 668V710" strokeWidth="2" />
      <path d="M630 537.500H692M975 868.500H1012" />
      <path d="M865.500 602V593.500H874.500V602M1114 601.500H825.500V628.500H833.500V610M825.500 697.500H833.500V784.500H825.500ZM823.500 766V776H826" />
      <path d="M966.500 859.500H833.500V852.500H825.500V871.500H834L966.500 870.500Z" />
    </g>

    {/* roof reference dashes */}
    <g stroke="#aaffff" strokeWidth="4" strokeLinecap="round">
      <path d="M766 524.500H773M795 524.500H813" />
      <path d="M576 772V800M576 823V846M576 868V891M576 913V943M830.500 880V900M830.500 922V943" strokeWidth="3" />
      <path d="M578 943H602M624 943H647M670 943H692M714 943H736M759 943H781M804 943H830" />
    </g>

    {/* home run wiring */}
    <g stroke="#000" strokeWidth="2">
      <path d="M584 245V524H663V530M762 272V302" />
      <path d="M585 302.500H767" strokeWidth="1" />
      <path d="M767.500 302V306M897.500 245V269" strokeWidth="3" />
      <path d="M589 475H824M847 475H943L966 498V801L989 824H1060" />
      <path d="M637 531H824M847 531H954M977 531L984 536" />
      <path d="M835 245V816L858 839H1060" />
      <path d="M1115 519H1017L994 542V750L1014 783L1062 810" />
      <path d="M1003 600L1095 804M1106 593L1107 680L1109 800" />
      <path d="M626 536L637 531M626 536H699L690 532M635 534.500H695M977 599H1028L1037 594M968 594L977 598" />
      <path d="M968 594.500H1038" strokeWidth="3" />
      <path d="M1053 820L1078 822L1078 824L1053 826ZM1053 835L1078 839L1053 843ZM1063 806L1059 813L1081 820ZM1088 799L1096 796L1101 820ZM1106 797H1114L1110 820Z" fill="#000" stroke="none" />
      <rect x="1075.500" y="820.500" width="38" height="37" strokeWidth="1" />
    </g>

    {/* device to device arcs */}
    <g stroke="#000" strokeWidth="2">
      <path d="M623 254L636 245M621 272L638 290L631 313L606 325M665 245L677 250L687 265M682 245L686 263" />
      <path d="M700 275Q717 277 740 277L773 271L807 259L833 245" />
      <path d="M594 339L583 359L582 387L593 417L609 433" />
      <path d="M699 553L670 564L642 580L625 595L614 609M715 552L757 555L793 564L824 578" />
      <path d="M847 592L865 603L893 631M901 631L942 603L954 599M977 589L982 588M1013 580L1040 575L1093 577" />
      <path d="M928 245L931 260L929 279M941 287H968L992 291L1017 301L1035 312L1053 327L1069 347" />
    </g>

    {/* selected wire with its control path */}
    <g stroke="#7c9adf" strokeWidth="3">
      <path d="M626 441L698 462L705 537" />
      <path d="M626 441L647 449L668 463L688 487L698 507L705 537" strokeWidth="4" />
      <path d="M626 441L647 449L668 463M688 487L694 495L701 517" stroke="#04144f" strokeWidth="2" />
    </g>

    {outlets.map(([x, y, r]) => <Outlet key={`${x}-${y}`} x={x} y={y} r={r} />)}

    <g fontFamily="'Liberation Sans', Arial, sans-serif" fontSize="24">
      {tags.map(([t, x, y, r, c]) => (
        <text key={`${x}-${y}`} transform={`translate(${x} ${y}) rotate(${r})`} fill={c}>{t}</text>
      ))}
    </g>
  </svg>
);

/* ---------- data ---------- */
type Big = { label: string[]; icon: React.ReactNode; w: number; drop?: "below" | "side" };
const build: Big[] = [
  { label: ["Wall"], icon: <WallI />, w: 54, drop: "below" },
  { label: ["Door"], icon: <DoorI />, w: 50 },
  { label: ["Window"], icon: <WindowI />, w: 60 },
  { label: ["Component"], icon: <ComponentI />, w: 110, drop: "below" },
  { label: ["Column"], icon: <ColumnI />, w: 74, drop: "below" },
  { label: ["Roof"], icon: <RoofI />, w: 66, drop: "below" },
  { label: ["Ceiling"], icon: <CeilingI />, w: 48 },
  { label: ["Floor"], icon: <FloorI />, w: 70, drop: "below" },
  { label: ["Curtain", "System"], icon: <CurtainSystemI />, w: 48 },
  { label: ["Curtain", "Grid"], icon: <CurtainGridI />, w: 60 },
  { label: ["Mullion"], icon: <MullionI />, w: 52 },
];
const circulation: Big[] = [
  { label: ["Railing"], icon: <RailingI />, w: 62, drop: "below" },
  { label: ["Ramp"], icon: <RampI />, w: 58 },
  { label: ["Stair"], icon: <StairI />, w: 40 },
];
const model: Big[] = [
  { label: ["Model", "Text"], icon: <ModelTextI />, w: 50 },
  { label: ["Model", "Line"], icon: <ModelLineI />, w: 50 },
  { label: ["Model", "Group"], icon: <ModelGroupI />, w: 68, drop: "side" },
];
const opening: Big[] = [
  { label: ["By", "Face"], icon: <ByFaceI />, w: 52 },
  { label: ["Shaft"], icon: <ShaftI />, w: 44 },
];

const BigList = ({ items }: { items: Big[] }) => (
  <>
    {items.map((b) => (
      <BigButton key={b.label.join(" ")} $w={b.w}>
        <BigIcon>{b.icon}</BigIcon>
        {b.label.map((l) => <span key={l}>{l}</span>)}
        {b.drop === "below" && <DropMark><Down /></DropMark>}
        {b.drop === "side" && <SideMark><Down /></SideMark>}
      </BigButton>
    ))}
  </>
);

const tabs: [string, number][] = [
  ["Structure", 85], ["Steel", 57], ["Precast", 73], ["Systems", 78], ["Insert", 60], ["Annotate", 86], ["Analyze", 76],
  ["Massing & Site", 124], ["Collaborate", 101], ["View", 57], ["Manage", 78], ["Add-Ins", 76], ["Modify", 72],
];

type Quick = ["icon" | "dim", string, React.ReactNode] | ["drop", string] | ["sep"];
const quick: Quick[] = [
  ["icon", "Open", <Open />], ["icon", "Save", <Save />], ["icon", "Synchronize", <Cube />], ["drop", "Synchronize options"],
  ["icon", "Undo", <Undo />], ["drop", "Undo history"], ["dim", "Redo", <Redo />], ["drop", "Redo history"],
  ["icon", "Print", <Print />], ["icon", "Export PDF", <Pdf />], ["sep"],
  ["icon", "Activate Dimensions", <DimPin />], ["sep"],
  ["icon", "Measure", <Measure />], ["drop", "Measure options"], ["icon", "Aligned Dimension", <Aligned />],
  ["icon", "Tag by Category", <TagOne />], ["icon", "Text", <LetterA />], ["sep"],
  ["icon", "Default 3D View", <House />], ["drop", "3D View options"], ["icon", "Section", <Section />], ["icon", "Thin Lines", <ThinLines />], ["sep"],
  ["icon", "Close Inactive Views", <CloseHidden />], ["icon", "Switch Windows", <Switch />], ["drop", "Window list"],
  ["icon", "Load Family", <Family />], ["drop", "Family options"],
];

type Node = { t: string; kind: "root" | "elev" | "view" | "panel"; icon?: React.ReactNode; mark?: "+" | "-"; sel?: boolean; last?: boolean };
const nodes: Node[] = [
  { t: "Elevations (Building Elevation)", kind: "elev" },
  { t: "East - Elec", kind: "view" },
  { t: "North - Elec", kind: "view" },
  { t: "South - Elec", kind: "view" },
  { t: "West - Elec", kind: "view", last: true },
  { t: "Legends", kind: "root", icon: tree.legend },
  { t: "Schedules/Quantities (all)", kind: "root", icon: tree.sched },
  { t: "Panel Schedules", kind: "root", icon: tree.panel, mark: "-" },
  { t: "100 A Exisitng, 120 V/208 V, Three Phase, 4 Wires", kind: "panel", sel: true },
  { t: "100 A N.C, 120 V/208 V, Three Phase, 4 Wires", kind: "panel" },
  { t: "200 A N.C, 120 V/208 V, Three Phase, 4 Wires", kind: "panel", last: true },
  { t: "Sheets (all)", kind: "root", icon: tree.sheet },
  { t: "Families", kind: "root", icon: tree.family, mark: "+" },
  { t: "Groups", kind: "root", icon: tree.group, mark: "+" },
  { t: "Revit Links", kind: "root", icon: tree.link, mark: "+" },
];

const Expander = ({ x, m }: { x: number; m: "+" | "-" }) => (
  <g>
    <rect x={x - 6} y="5.500" width="12" height="12" fill="#fafafa" stroke="#8f8f8f" />
    <path d={`M${x - 4} 11.500H${x + 4}` + (m === "+" ? `M${x} 7.500V15.500` : "")} stroke="#2b4f9e" />
  </g>
);

const leadWidth = { root: 26, elev: 107, view: 133, panel: 55 };

const Lead = ({ n, end }: { n: Node; end?: boolean }) => {
  const w = leadWidth[n.kind];
  return (
    <svg width={w} height="22" viewBox={`0 0 ${w} 22`} fill="none">
      <g stroke="#9c9c9c" strokeDasharray="1 1">
        <path d={`M10.500 0V${end ? 11 : 22}`} />
        {n.kind === "root" && <path d="M11 11.500H25" />}
        {n.kind === "elev" && <path d="M88.500 0V5M95 11.500H106" />}
        {n.kind === "view" && <path d={`M114.500 0V${n.last ? 11 : 22}M115 11.500H132`} />}
        {n.kind === "panel" && <path d={`M36.500 0V${n.last ? 11 : 22}M37 11.500H55`} />}
      </g>
      {n.mark && <Expander x={10.5} m={n.mark} />}
      {n.kind === "elev" && <Expander x={88.5} m="-" />}
    </svg>
  );
};

export default function App() {
  return (
    <Window>
      <Global />
      <SharedPaint />

      <TitleBar>
        <Logo><RevitLogo /></Logo>
        <QuickAccess>
          <Tool aria-label="Home"><HomeMenu /></Tool>
          <QuickGroup>
            {quick.map((q, i) => {
              if (q[0] === "sep") return <Divider key={i} />;
              if (q[0] === "drop") return <Tool key={q[1]} $w={15} aria-label={q[1]}><Down /></Tool>;
              return <Tool key={q[1]} aria-label={q[1]} $dim={q[0] === "dim"}>{q[2]}</Tool>;
            })}
            <Tool $w={18} aria-label="Customize toolbar"><Customize /></Tool>
          </QuickGroup>
        </QuickAccess>
        <WindowTitle>Autodesk Revit 2023 - electrical Wardah Shams - Floor Plan: 0 - Lighting Existing</WindowTitle>
        <Account>
          <Tool $w={17} aria-label="Collapse">
            <svg width="5" height="9" viewBox="0 0 5 9" fill="#3a3a3a"><path d="M5 0V9L0 4.500Z" /></svg>
          </Tool>
          <Tool aria-label="Search"><Binoculars /></Tool>
          <Tool aria-label="Profile"><User /></Tool>
          <UserButton>wardahshams7<Down /></UserButton>
          <Tool aria-label="Store"><Cart /></Tool>
          <Divider $w={14} />
          <Tool aria-label="Help"><Help /></Tool>
          <Tool $w={15} aria-label="Help options"><Down /></Tool>
          <WindowButtons>
            <Tool $w={31} aria-label="Minimize">
              <svg width="12" height="14" viewBox="0 0 12 14"><path d="M1 11H11V14H1Z" fill="#222" /></svg>
            </Tool>
            <Tool $w={31} aria-label="Restore">
              <svg width="16" height="14" viewBox="0 0 16 14" fill="none" stroke="#222" strokeWidth="1.400"><path d="M4.500 5V1H15V9H11.500" /><path d="M4.500 1.500H15" strokeWidth="3" /><path d="M1 6H11V13H1Z" /><path d="M1 6.500H11" strokeWidth="3" /></svg>
            </Tool>
            <Tool $w={31} aria-label="Close"><Cross /></Tool>
          </WindowButtons>
        </Account>
      </TitleBar>

      <RibbonTabs>
        <RibbonTab $w={56} $kind="file">File</RibbonTab>
        <RibbonTab $w={102} $kind="active">Architecture</RibbonTab>
        {tabs.map(([t, w]) => <RibbonTab key={t} $w={w}>{t}</RibbonTab>)}
        <RibbonToggle aria-label="Minimize ribbon">
          <svg width="19" height="12" viewBox="0 0 19 12"><rect x="0.700" y="0.700" width="17.600" height="10.600" rx="3" fill="#f3f3f3" stroke="#4a525c" strokeWidth="1.300" /><path d="M6 8H13L9.500 4Z" fill="#3a3a3a" /></svg>
          <Down c="#000" />
        </RibbonToggle>
      </RibbonTabs>

      <Ribbon>
        <Panel $w={73}>
          <PanelBody>
            <ModifyButton>
              <BigIcon><ArrowCursor /></BigIcon>
              <span>Modify</span>
            </ModifyButton>
          </PanelBody>
          <PanelTitle>Select <Down s={10} /></PanelTitle>
        </Panel>
        <Panel $w={702}>
          <PanelBody $pad={3}><BigList items={build} /></PanelBody>
          <PanelTitle>Build</PanelTitle>
        </Panel>
        <Panel $w={177}>
          <PanelBody $pad={9}><BigList items={circulation} /></PanelBody>
          <PanelTitle>Circulation</PanelTitle>
        </Panel>
        <Panel $w={173}>
          <PanelBody $pad={2}><BigList items={model} /></PanelBody>
          <PanelTitle>Model</PanelTitle>
        </Panel>
        <Panel $w={191}>
          <PanelBody>
            <BigList items={opening} />
            <SmallColumn $left={7}>
              <SmallButton><OpenWall />Wall</SmallButton>
              <SmallButton><OpenVertical />Vertical</SmallButton>
              <SmallButton><OpenDormer />Dormer</SmallButton>
            </SmallColumn>
          </PanelBody>
          <PanelTitle>Opening</PanelTitle>
        </Panel>
        <Panel $w={298}>
          <PanelBody>
            <SmallColumn $left={7} $w={151}>
              <SmallButton><RoomI />Room</SmallButton>
              <SmallButton><RoomSepI />{"Room  Separator"}</SmallButton>
              <SmallButton><TagRoomI />{"Tag  Room"}<Down /></SmallButton>
            </SmallColumn>
            <SmallColumn>
              <SmallButton><AreaI />Area<Down /></SmallButton>
              <SmallButton $off disabled><AreaBoundI />{"Area  Boundary"}</SmallButton>
              <SmallButton><TagAreaI />{"Tag  Area"}<Down /></SmallButton>
            </SmallColumn>
          </PanelBody>
          <PanelTitle>{"Room & Area"} <Down s={10} /></PanelTitle>
        </Panel>
        <Panel $w={80}>
          <PanelBody>
            <SmallColumn $top={17} $left={7}>
              <SmallButton $off disabled><LevelI />Level</SmallButton>
              <SmallButton><GridI />Grid</SmallButton>
            </SmallColumn>
          </PanelBody>
          <PanelTitle>Datum</PanelTitle>
        </Panel>
        <Panel $w={158} $last>
          <PanelBody>
            <BigList items={[{ label: ["Set"], icon: <SetI />, w: 52, drop: "below" }]} />
            <SmallColumn $left={3}>
              <SmallButton><ShowI />Show</SmallButton>
              <SmallButton><RefI />{"Ref  Plane"}</SmallButton>
              <SmallButton><ViewerI />Viewer</SmallButton>
            </SmallColumn>
          </PanelBody>
          <PanelTitle>Work Plane</PanelTitle>
        </Panel>
      </Ribbon>
      <OptionsBar />

      <WorkArea>
        <Dock>
          <DockHeader>
            <DockTitle>Properties</DockTitle>
            <CloseButton aria-label="Close properties"><Cross /></CloseButton>
          </DockHeader>
          <TypeSelector>
            <TypeThumb><PlanShape w={40} /></TypeThumb>
            <TypeName>Floor Plan</TypeName>
            <Down s={10} />
          </TypeSelector>
          <InstanceRow>
            <SelectBox>
              <InstanceSelect aria-label="Instance">
                <option>Floor Plan: 0 - Lighting Existing</option>
              </InstanceSelect>
              <svg width="10" height="6" viewBox="0 0 10 6" fill="none" stroke="#555"><path d="M0.500 0.500L5 5L9.500 0.500" /></svg>
            </SelectBox>
            <EditType>
              <svg width="16" height="16" viewBox="0 0 16 16" fill="#f4f5f6" stroke={INK}><path d="M0.500 2.500L2 0.500H7V6.500H0.500ZM9 2.500L10.500 0.500H15.500V6.500H9ZM0.500 10L2 8.500H7V15H0.500Z" /><rect x="8.500" y="7.500" width="7" height="8" fill="#fff" /><path d="M10 9.500H14" stroke="#2a6fc8" strokeWidth="2" /><path d="M10.500 12.500L13.500 14" stroke="#2a6fc8" /></svg>
              Edit Type
            </EditType>
          </InstanceRow>
          <Scroller>
            <Grid>
              <colgroup><col width="161" /><col width="162" /><col width="15" /></colgroup>
              <thead>
                <tr>
                  <GroupHead colSpan={3}>
                    <GroupLabel>Graphics
                      <svg width="8" height="9" viewBox="0 0 8 9" fill="none" stroke="#000" strokeWidth="1.300"><path d="M1 4L4 1L7 4M1 8L4 5L7 8" /></svg>
                    </GroupLabel>
                  </GroupHead>
                </tr>
              </thead>
              <tbody>
                <tr><th scope="row"><label htmlFor="scale">View Scale</label></th><td><ValueInput id="scale" defaultValue={'1/8" = 1\'-0"'} /></td><td /></tr>
                <tr><th scope="row"><Muted>{"Scale Value     1:"}</Muted></th><td><Muted>96</Muted></td><td /></tr>
                <tr><th scope="row">Display Model</th><td>Normal</td><td /></tr>
                <tr><th scope="row">Detail Level</th><td>Medium</td><td /></tr>
                <tr><th scope="row">Parts Visibility</th><td>Show Original</td><td /></tr>
                <tr><th scope="row">Visibility/Graphics O...</th><td><EditButton>Edit...</EditButton></td><td /></tr>
                <tr><th scope="row">Graphic Display Opti...</th><td><EditButton>Edit...</EditButton></td><td /></tr>
                <tr><th scope="row">Orientation</th><td>Project North</td><td /></tr>
              </tbody>
            </Grid>
            <VTrack $top={21}><VThumb $h={33} /></VTrack>
          </Scroller>
          <DockFooter>
            <HelpLink href="#help">Properties help</HelpLink>
            <ApplyButton disabled>Apply</ApplyButton>
          </DockFooter>

          <DockHeader>
            <DockTitle>Project Browser - electrical Wardah Shams</DockTitle>
            <CloseButton aria-label="Close browser"><Cross /></CloseButton>
          </DockHeader>
          <TreeRow>
            <Tree>
              {nodes.map((n, i) => (
                <TreeItem key={n.t}>
                  <Lead n={n} end={i === nodes.length - 1} />
                  {n.icon}
                  <TreeLabel $sel={n.sel} $gap={n.icon ? 6 : 3}>{n.t}</TreeLabel>
                </TreeItem>
              ))}
            </Tree>
            <VTrack $top={187}><VThumb $h={131} /></VTrack>
          </TreeRow>
          <HTrack><HThumb $w={238} /></HTrack>
        </Dock>

        <Documents>
          <DocTabs>
            <DocTab $w={206} $active><PlanShape w={20} />0 - Lighting Existing<Cross /></DocTab>
            <DocTab $w={168}><PlanShape w={20} faded />0 - Lighting N.C</DocTab>
            <DocTab $w={160}><PlanShape w={20} faded />HVAC Existing</DocTab>
            <DocTab $w={160}><PlanShape w={20} faded />HVAC N.C</DocTab>
            <DocTab $w={160}><House faded />{"{3D}"}</DocTab>
            <DocTab $w={290}><ScheduleI faded />100 A Exisitng, 120 V/208 V, Three...</DocTab>
            <DocMenu aria-label="Tab list"><Customize /></DocMenu>
          </DocTabs>
          <ViewRow>
            <Canvas>
              <FloorPlan />
              <NavBar>
                <NavEnd><svg width="9" height="9" viewBox="0 0 9 9" fill="none" stroke="#a9a9a9"><circle cx="4.500" cy="4.500" r="3.800" fill="#ddd" /><path d="M3 3L6 6M6 3L3 6" /></svg></NavEnd>
                <svg width="26" height="26" viewBox="0 0 26 26" overflow="visible" fill="none" stroke="#9a9a9a" strokeWidth="1.300"><path d="M8 2H20V14C20 18 16 21 12 21C5 21 2 17 2 12C2 7 4 3 8 2Z" fill="#eaeaea" /><circle cx="11.500" cy="11.500" r="5" fill="#f5f5f5" /><path d="M8 15L5 18" /><text x="13" y="24" fontFamily="Open Sans" fontWeight="700" fontSize="9" fill="#5f97cf" stroke="none">2D</text></svg>
                <Down c="#999" />
                <NavLine />
                <svg width="18" height="18" viewBox="0 0 18 18" fill="none" stroke="#999"><rect x="1" y="1" width="11" height="11" fill="#b9d8a8" stroke="#85b070" /><circle cx="12" cy="11" r="3.600" fill="#e9eef2" strokeWidth="1.300" /><path d="M14 14L17 17" strokeWidth="1.800" /></svg>
                <Down c="#999" />
                <NavEnd><svg width="9" height="9" viewBox="0 0 9 9" fill="none" stroke="#a9a9a9"><circle cx="4.500" cy="4.500" r="3.800" fill="#ddd" /><path d="M3 4.500H6" /></svg></NavEnd>
              </NavBar>
            </Canvas>
            <RightTrack><i /></RightTrack>
          </ViewRow>
          <ViewBar>
            <ScaleText>{'1/8" = 1\'-0"'}</ScaleText>
            {viewTools.map(([name, icon]) => <ViewTool key={name} aria-label={name}>{icon}</ViewTool>)}
            <BottomTrack><i /></BottomTrack>
            <svg width="12" height="12" viewBox="0 0 12 12" fill="#a5a5a5"><path d="M9 0H11V2H9ZM9 4H11V6H9ZM9 8H11V10H9ZM5 4H7V6H5ZM5 8H7V10H5ZM1 8H3V10H1Z" /></svg>
          </ViewBar>
        </Documents>
      </WorkArea>
    </Window>
  );
}
